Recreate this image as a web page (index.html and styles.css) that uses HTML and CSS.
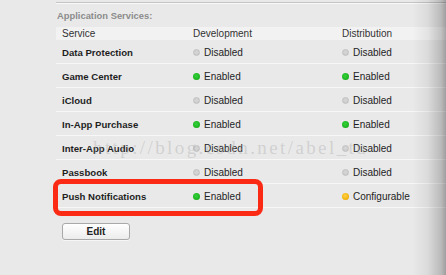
FILE: index.html
```html
<!DOCTYPE html>
<html>
<head>
<meta charset="utf-8">
<link rel="stylesheet" href="styles.css">
</head>
<body>
<div class="page">
  <div class="divider"></div>
  <div class="title">Application Services:</div>
  <div class="table">
    <div class="row head">
      <div class="c1">Service</div>
      <div class="c2">Development</div>
      <div class="c3">Distribution</div>
    </div>
    <div class="row">
      <div class="c1 name">Data Protection</div>
      <div class="c2"><span class="dot off"></span>Disabled</div>
      <div class="c3"><span class="dot off"></span>Disabled</div>
    </div>
    <div class="row">
      <div class="c1 name">Game Center</div>
      <div class="c2"><span class="dot on"></span>Enabled</div>
      <div class="c3"><span class="dot on"></span>Enabled</div>
    </div>
    <div class="row">
      <div class="c1 name">iCloud</div>
      <div class="c2"><span class="dot off"></span>Disabled</div>
      <div class="c3"><span class="dot off"></span>Disabled</div>
    </div>
    <div class="row">
      <div class="c1 name">In-App Purchase</div>
      <div class="c2"><span class="dot on"></span>Enabled</div>
      <div class="c3"><span class="dot on"></span>Enabled</div>
    </div>
    <div class="row">
      <div class="c1 name">Inter-App Audio</div>
      <div class="c2"><span class="dot off"></span>Disabled</div>
      <div class="c3"><span class="dot off"></span>Disabled</div>
    </div>
    <div class="row">
      <div class="c1 name">Passbook</div>
      <div class="c2"><span class="dot off"></span>Disabled</div>
      <div class="c3"><span class="dot off"></span>Disabled</div>
    </div>
    <div class="row">
      <div class="c1 name">Push Notifications</div>
      <div class="c2"><span class="dot on"></span>Enabled</div>
      <div class="c3"><span class="dot warn"></span>Configurable</div>
    </div>
  </div>
  <div class="actions"><button class="btn">Edit</button></div>
</div>
<div class="watermark">http://blog.csdn.net/abel_tu</div>
<div class="highlight"></div>
<div class="edge"></div>
</body>
</html>
```

FILE: styles.css
```css
html, body {
  margin: 0;
  padding: 0;
}
body {
  width: 446px;
  height: 275px;
  overflow: hidden;
  background: #e9e9e9;
  font-family: "Liberation Sans", Arial, sans-serif;
  font-size: 10px;
  color: #1e1e1e;
  position: relative;
}
.page {
  padding-top: 2px;
}
.divider {
  margin-left: 56px;
  border-top: 1px solid #c4c4c4;
  border-bottom: 1px solid #f9f9f9;
}
.title {
  margin-left: 57px;
  height: 23px;
  line-height: 23px;
  font-size: 9.4px;
  font-weight: bold;
  color: #8c8c8c;
}
.table {
  margin-left: 56px;
}
.row {
  display: grid;
  grid-template-columns: 131px 149px 1fr;
  height: 23px;
  border-bottom: 1px solid #f7f7f7;
  box-sizing: content-box;
}
.row > div {
  padding-left: 6px;
  padding-top: 2px;
  line-height: 21px;
  white-space: nowrap;
  display: flex;
  align-items: center;
  height: 21px;
}
.row.head {
  height: 13px;
  background: #f2f2f2;
  border-bottom: none;
  color: #333;
}
.row.head > div {
  padding-top: 0;
  height: 13px;
  line-height: 13px;
}
.name {
  font-weight: bold;
  font-size: 9.6px;
}
.dot {
  display: inline-block;
  width: 7px;
  height: 7px;
  border-radius: 50%;
  margin-right: 4px;
  box-sizing: border-box;
}
.dot.off {
  background: radial-gradient(circle at 50% 45%, #d8d8d8 0, #cfcfcf 55%, #b9b9b9 100%);
  border: 1px solid #c2c2c2;
}
.dot.on {
  background: radial-gradient(circle at 45% 40%, #35d23a 0, #1eb622 60%, #139a16 100%);
}
.dot.warn {
  background: radial-gradient(circle at 45% 40%, #ffd34a 0, #f4b40e 60%, #d89a00 100%);
}
.actions {
  padding: 15px 0 0 62px;
}
.btn {
  width: 68px;
  height: 17px;
  padding: 0;
  border: 1px solid #a9a9a9;
  border-radius: 3px;
  background: linear-gradient(#ffffff, #ececec);
  font-family: "Liberation Sans", Arial, sans-serif;
  font-size: 10px;
  font-weight: bold;
  color: #222;
  box-shadow: 0 1px 0 rgba(255,255,255,0.6);
}
.watermark {
  position: absolute;
  left: 93px;
  top: 137px;
  font-family: "Liberation Serif", "Times New Roman", serif;
  font-size: 19px;
  letter-spacing: 2.4px;
  color: rgba(170,170,170,0.4);
  white-space: nowrap;
  pointer-events: none;
}
.highlight {
  position: absolute;
  left: 53px;
  top: 179px;
  width: 210px;
  height: 37px;
  box-sizing: border-box;
  border: 5px solid #fa2a14;
  border-radius: 8px;
}
.edge {
  position: absolute;
  right: 0;
  top: 0;
  width: 34px;
  height: 275px;
  background: linear-gradient(to right, rgba(0,0,0,0), rgba(0,0,0,0.06) 45%, rgba(0,0,0,0.2) 85%, rgba(0,0,0,0.32));
}
```
